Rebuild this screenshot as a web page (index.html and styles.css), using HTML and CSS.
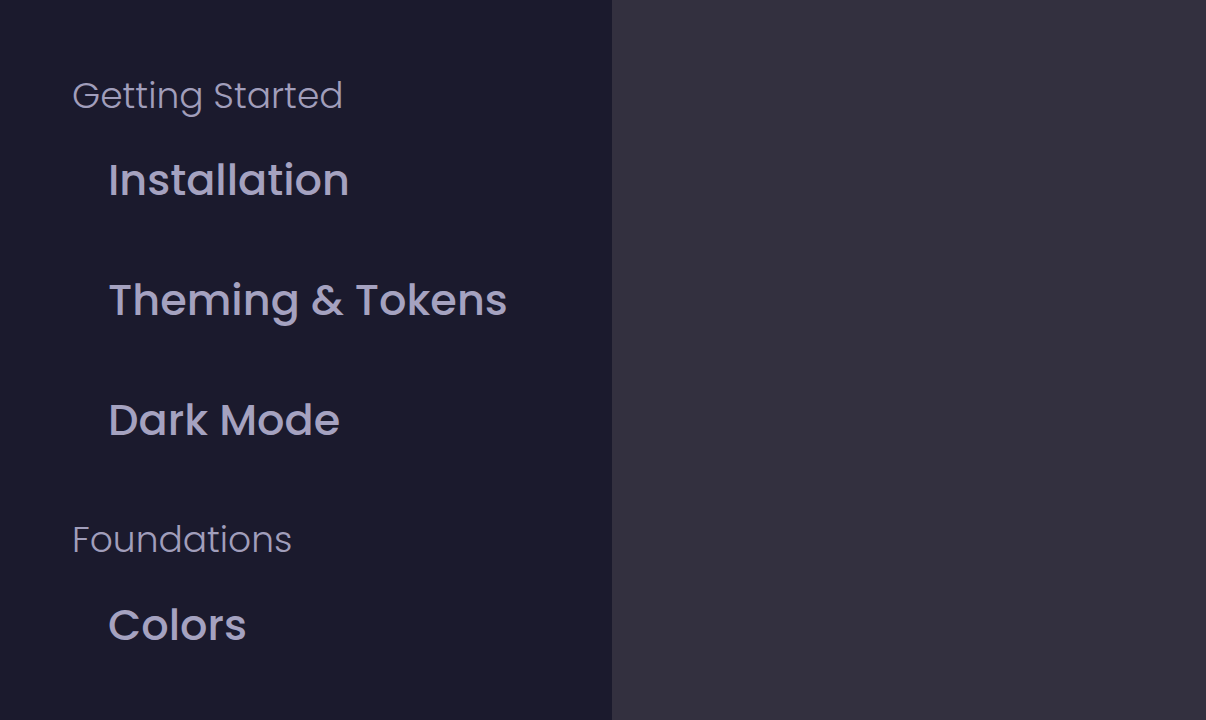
FILE: index.html
```html
<html>
<head>
    <title>Docs</title>
    <link rel="stylesheet" href="styles.css">
</head>
<body>
    <div class="layout">
        <nav class="sidebar">
            <div class="group">
                <h3 class="group-title">Getting Started</h3>
                <a class="nav-item" href="#installation">Installation</a>
                <a class="nav-item" href="#theming">Theming &amp; Tokens</a>
                <a class="nav-item" href="#dark-mode">Dark Mode</a>
            </div>
            <div class="group">
                <h3 class="group-title">Foundations</h3>
                <a class="nav-item" href="#colors">Colors</a>
            </div>
        </nav>
        <main class="content"></main>
    </div>
</body>
</html>
```

FILE: styles.css
```css
html, body {
    margin: 0;
    height: 100%;
}
body {
    font-family: "Poppins", "Inter", "Noto Sans", sans-serif;
    background: #33303f;
    overflow: hidden;
}
.layout {
    display: flex;
    height: 100%;
}
.sidebar {
    width: 612px;
    flex-shrink: 0;
    background: #1b1a2d;
    padding: 72px 0 0 72px;
    box-sizing: border-box;
}
.content {
    flex: 1;
    background: #33303f;
}
.group {
    display: flex;
    flex-direction: column;
    align-items: flex-start;
}
.group + .group {
    margin-top: 36px;
}
.group-title {
    margin: 0;
    font-size: 36px;
    line-height: 48px;
    font-weight: 300;
    color: #a19ebb;
}
.group + .group .group-title {
    margin-bottom: 1px;
}
.nav-item {
    display: block;
    padding-left: 36px;
    font-size: 43px;
    line-height: 120px;
    font-weight: 500;
    color: #a5a2c0;
    text-decoration: none;
}
```
